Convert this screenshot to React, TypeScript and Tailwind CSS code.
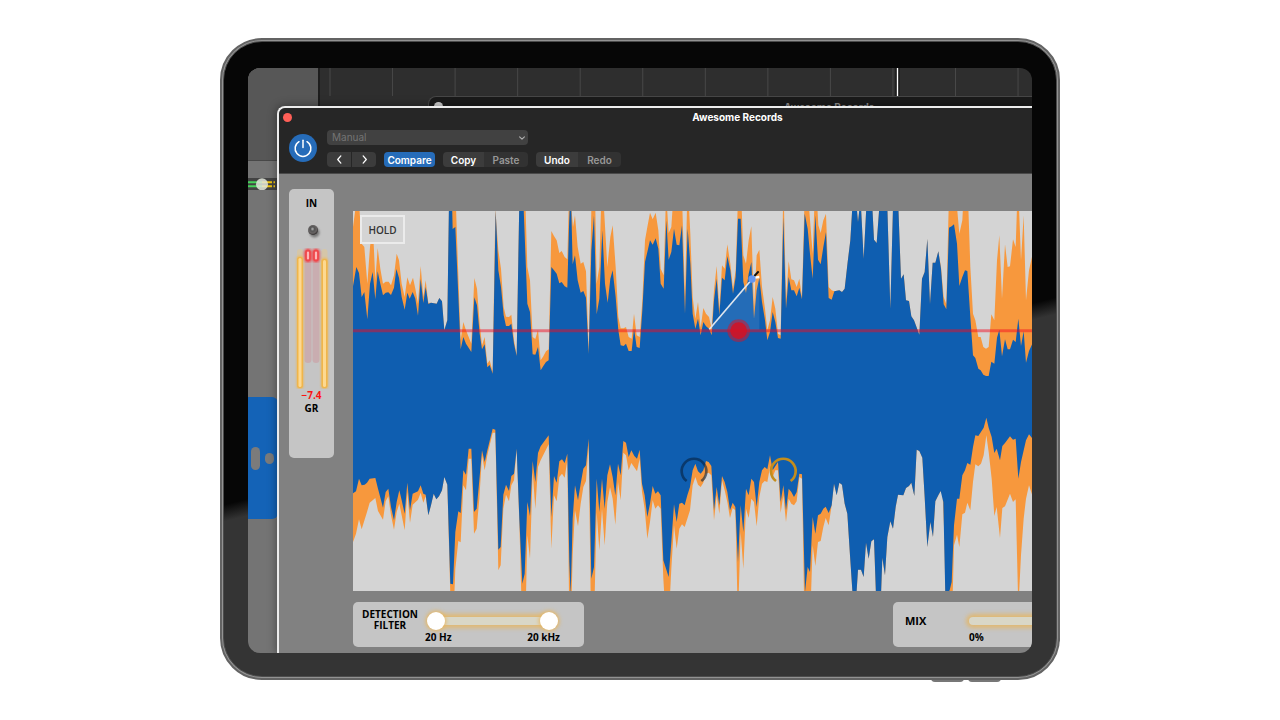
import type { ReactNode } from 'react';

type Segment = [offset: number, points: string];

const LOWER_OFFSET = 585;

const upperPeaks: Segment[] = [
  [0, '24,80 32,20 43,20 50,130 58,140 67,250 75,140 80,100 86,130 91,240 98,143 106,205 114,250 122,244 131,244 138,255 147,225 155,160 162,180 170,250 179,290 187,231 195,255 204,232 211,265 219,310 227,197 235,290 242,240 250,308 258,307 275,310 283,293 291,303 298,390 307,358 312,20 333,20 338,170 347,420 355,365 363,390 379,430 388,233 396,265 404,370 411,435 419,410 427,490 434,480 443,515 451,25 460,150 468,205 476,320 483,349 492,350 499,343 507,420 515,465 523,0 541,0 547,200 555,240 563,410 571,416 579,388 587,480 595,468 603,453 611,447 619,92 627,107 635,120 643,158 650,152 659,170 667,177 671,20 679,20 684,80'],
  [690, '0,45 8,140 17,190 25,185 33,213 41,450 49,25 61,25 65,250 73,200 78,25 87,25 97,200 106,110 113,75 122,200 130,350 137,384 146,384 153,380 161,410 170,415 177,340 185,405 194,410 202,300 210,120 217,80 225,37 233,57 242,37 250,90 257,205 266,225 272,20 276,20 281,98 289,80 293,20 322,20 330,290 336,20 342,20 346,100 353,290 361,355 369,305 377,382 385,323 393,340 402,350 410,385 417,270 425,197 433,325 441,195 449,205 457,132 466,190 474,265 482,210 488,20 500,20 505,165 513,190 521,120 529,78 537,320 545,165 553,148 561,260 570,325 577,390 585,360 593,290 601,325 609,400 617,405 624,20 627,20 633,300 641,183 649,237 657,240 665,260 673,235 681,290 688,20'],
  [1380, '12,20 23,160 28,20 37,20 40,75 47,98 55,60 63,40 71,260 80,270 88,273 103,270 111,275 119,265 128,185 136,120 142,20 155,20 159,65 164,20 168,20 176,175 184,20 202,20 207,118 215,128 223,20 247,20 256,325 264,20 280,20 288,235 296,222 303,300 312,302 319,348 327,360 343,403 351,235 359,215 367,115 375,312 383,187 391,187 400,153 408,200 416,290 424,312 431,20 456,20 463,100 472,60 474,20 490,20 496,200 504,340 511,360 520,410 527,410 535,440 543,445 551,440 559,342 568,360 576,180 583,105 591,295 600,132 608,200 615,198 624,117 632,140 636,20 642,20 648,180 656,45 663,300 672,210 683,160'],
];

const lowerPeaks: Segment[] = [
  [0, '24,440 33,415 42,372 50,402 66,350 74,322 83,315 91,308 99,347 114,373 122,318 130,303 138,360 147,403 155,350 163,325 170,360 179,405 187,290 195,383 203,328 219,313 227,292 235,322 242,303 250,360 258,330 266,295 274,312 282,303 291,285 298,245 307,268 316,600 328,600 331,520 340,437 347,441 355,270 363,285 371,190 379,190 387,415 395,400 403,310 411,180 419,225 427,180 443,112 451,112 460,525 467,510 475,340 483,298 492,318 499,270 507,255 515,162 523,380 529,600 543,600 547,420 555,490 563,230 571,340 579,215 587,195 611,147 619,460 627,300 635,318 643,245 651,235 659,247 667,195 672,600 680,600 683,480'],
  [690, '0,345 9,393 17,325 25,275 33,257 41,150 47,600 59,600 65,350 73,465 81,340 89,450 97,320 105,275 113,310 121,388 129,260 137,315 145,172 153,180 161,225 169,203 186,228 194,190 201,290 209,340 217,430 225,380 233,315 241,340 249,330 257,340 265,550 268,600 285,600 289,520 297,390 305,460 313,400 321,387 329,395 337,370 345,345 353,270 361,245 369,268 377,275 385,262 393,235 401,232 409,240 417,375 425,300 433,355 441,255 449,285 457,320 465,368 473,338 481,345 487,600 491,600 497,410 505,520 513,340 521,368 529,310 537,320 545,393 553,305 561,265 569,257 577,260 585,215 593,245 601,225 609,225 617,352 625,300 633,380 641,310 649,325 657,330 665,318 673,245 681,250 687,600'],
  [1380, '0,600 18,600 23,450 31,512 39,440 47,437 55,395 62,368 71,390 80,330 87,265 95,300 103,262 111,268 119,325 127,355 135,480 143,600 154,600 159,523 168,523 176,545 183,442 191,490 199,438 207,432 213,600 228,600 232,487 240,540 247,425 256,378 264,400 272,335 279,298 295,300 303,278 312,272 319,262 328,302 335,163 343,167 352,187 359,305 367,455 376,380 384,425 391,318 400,300 407,287 413,300 418,420 421,600 443,600 447,450 456,418 463,455 472,357 480,352 487,322 496,345 504,260 511,207 520,213 528,205 536,180 544,120 551,170 560,250 568,362 575,335 585,428 592,338 600,333 615,295 624,320 632,312 639,600 642,600 648,480 656,370 663,310 672,270 683,304'],
];

const upperLevel: Segment[] = [
  [0, '24,258 34,200 42,218 50,290 58,275 67,357 75,250 83,215 91,297 98,213 106,250 114,285 122,277 130,276 138,284 147,262 154,206 162,232 170,290 179,328 187,277 194,295 203,275 211,295 219,346 227,236 235,308 242,260 250,311 258,307 275,310 283,293 291,303 298,390 307,360 312,0 321,0 323,86 331,80 347,447 355,410 363,430 379,455 388,291 396,315 404,400 411,447 419,432 427,501 434,494 443,520 452,30 460,210 468,260 476,345 483,377 492,377 499,370 507,430 515,467 523,0 535,0 547,310 555,335 563,462 571,463 579,440 587,510 595,497 603,485 611,480 619,200 627,210 635,220 643,249 650,245 659,258 667,262 672,80 675,0 679,32 683,192'],
  [690, '0,165 8,240 17,277 25,272 33,292 41,460 49,150 57,45 65,342 73,295 82,90 90,250 98,307 106,235 113,210 122,290 130,390 137,435 146,437 153,430 161,452 170,452 177,385 185,440 194,443 202,330 210,185 217,155 225,120 233,133 242,114 250,145 257,250 266,265 274,60 281,178 289,155 297,85 305,133 313,135 321,75 330,340 338,85 346,190 353,340 361,385 369,355 377,405 385,365 393,378 402,385 410,405 417,300 425,235 433,345 441,232 449,240 457,168 466,210 474,280 482,230 489,55 497,55 505,245 513,278 521,220 529,185 537,355 545,270 553,232 561,305 570,360 577,420 585,395 593,335 601,365 609,413 617,415 625,50 633,325 641,230 649,270 657,270 665,288 673,262 681,297 689,40'],
  [1380, '0,45 8,85 15,160 23,235 31,45 39,178 47,192 55,140 63,95 71,293 80,298 88,273 103,270 111,275 119,265 128,185 136,120 142,20 155,20 159,65 164,20 168,20 176,175 184,20 202,20 207,118 215,128 223,20 247,20 256,325 264,20 280,20 288,235 296,222 303,300 312,302 319,348 327,360 343,403 351,235 359,215 367,115 375,312 383,187 391,187 400,153 408,205 416,312 424,327 432,82 440,78 447,72 456,130 463,257 472,230 480,210 487,212 496,350 504,465 511,473 520,505 527,510 535,523 543,527 551,527 559,484 568,490 576,412 583,388 591,468 600,417 608,447 615,447 624,418 632,425 640,355 648,437 656,393 663,487 672,452 683,428'],
];

const lowerLevel: Segment[] = [
  [0, '24,294 33,288 42,250 50,270 59,268 66,262 74,250 91,248 99,280 114,337 122,290 130,280 138,335 147,375 155,320 163,285 170,315 179,355 187,262 195,345 203,295 219,288 227,270 235,295 242,298 250,360 258,330 266,295 274,312 282,303 291,285 298,245 307,268 316,565 324,567 331,410 340,348 347,353 355,225 363,238 371,160 379,160 387,350 395,340 403,255 411,165 419,200 427,165 443,100 451,103 460,463 467,455 475,298 483,268 492,287 499,242 507,235 515,160 523,370 532,565 539,535 547,320 555,362 563,197 571,260 579,173 587,153 611,120 619,365 627,242 635,262 643,198 651,192 659,203 667,175 673,500 677,600 683,370'],
  [690, '0,270 9,315 17,265 25,220 33,210 41,130 49,550 57,515 65,250 73,350 81,250 89,340 97,240 105,207 113,245 121,300 129,205 137,240 145,137 153,142 161,185 169,165 178,182 186,190 194,163 201,265 209,300 217,365 225,325 233,272 241,295 249,288 257,300 265,495 281,545 289,440 297,327 305,380 313,325 321,322 329,330 337,300 345,275 353,225 361,205 369,228 377,235 385,225 393,197 401,200 409,212 417,345 425,275 433,330 441,242 449,260 457,290 465,345 473,322 481,335 489,500 497,330 505,410 513,280 521,300 529,250 537,260 545,335 553,260 561,225 569,215 577,222 585,180 593,225 609,200 617,320 625,270 633,345 641,280 649,290 657,305 665,290 673,235 681,237'],
  [1380, '0,590 8,515 15,530 23,365 31,415 39,360 47,355 55,340 62,334 71,353 80,330 87,265 95,300 103,262 111,268 119,325 127,355 135,480 143,600 154,600 159,523 168,523 176,545 183,442 191,490 199,438 207,432 213,600 228,600 232,487 240,540 247,425 256,378 264,400 272,335 279,298 295,300 303,278 312,272 319,262 328,302 335,163 343,167 352,187 359,305 367,455 376,380 384,425 391,318 400,300 407,287 415,320 421,600 434,585 440,560 447,390 456,310 463,310 472,240 480,225 487,203 496,208 504,155 511,120 520,122 536,97 544,67 551,97 560,125 568,173 575,160 585,195 592,152 600,143 615,123 624,133 632,130 640,250 648,200 663,135 672,117 683,130'],
];

function expand(segments: Segment[], dy: number): string[] {
  return segments.flatMap(([dx, points]) =>
    points.split(' ').map((pair) => {
      const [x, y] = pair.split(',').map(Number);
      return `${x + dx},${y + dy}`;
    }),
  );
}

function band(upper: Segment[], lower: Segment[]): string {
  return [...expand(upper, 0), ...expand(lower, LOWER_OFFSET).reverse()].join(' ');
}

function Waveform() {
  return (
    <svg
      className="block h-[380px] w-full bg-[#d4d4d4]"
      viewBox="24 32 2037 1140"
      preserveAspectRatio="none"
      role="img"
      aria-label="Waveform"
    >
      <polygon points={band(upperPeaks, lowerPeaks)} fill="#f7983d" />
      <polygon points={band(upperLevel, lowerLevel)} fill="#0f5eb0" />
      <polygon points="1093,388 1225,233 1243,233 1243,388" fill="#fff" opacity="0.09" />
      <path d="M24 391H2061" stroke="#f50a1e" strokeWidth="9" opacity="0.48" />
      <path d="M1093 387L1217 241" stroke="#dfe6ee" strokeWidth="5" />
      <path d="M1228 232L1243 230" stroke="#fff" strokeWidth="7" />
      <path d="M1228 227L1241 213" stroke="#111" strokeWidth="6" />
      <circle cx="1221" cy="236" r="11" fill="#6596f0" />
      <circle cx="1181" cy="391" r="34" fill="#e1101f" opacity="0.5" />
      <circle cx="1181" cy="391" r="25" fill="#d41224" opacity="0.85" />
      <path d="M1025 842A37 37 0 1 1 1069 842" fill="none" stroke="#06213f" strokeWidth="8" opacity="0.6" />
      <path d="M1293 842A37 37 0 1 1 1337 842" fill="none" stroke="#c48d1c" strokeWidth="8" />
    </svg>
  );
}

function Desktop() {
  return (
    <div className="absolute inset-0 flex bg-[#2e2e2e]" aria-hidden="true">
      <div className="flex w-[70px] shrink-0 flex-col bg-[#747474]">
        <div className="h-[93px] border-b border-[#484848] bg-[#575757]" />
        <div className="mt-[17px] h-3 bg-[#434343]">
          <svg className="block h-3 w-[30px]" viewBox="0 0 30 12">
            <path d="M0 4.3H14M0 8.3H14" stroke="#45d35a" strokeWidth="2" />
            <path d="M14 4.3H24M14 8.3H24M25.5 4.3H27M25.5 8.3H27" stroke="#f3c80c" strokeWidth="2" />
            <circle cx="14" cy="6.3" r="6" fill="#e2e6da" opacity="0.85" />
          </svg>
        </div>
        <div className="mt-[207px] flex h-[122px] w-[30px] items-center gap-[5px] rounded-r-md bg-[#1463b7] pl-[3px]">
          <span className="h-[23px] w-[9px] rounded-full bg-[#7b7b7b]" />
          <span className="h-[11px] w-[9px] rounded-full bg-[#7b7b7b]" />
        </div>
      </div>
      <div className="relative h-10 flex-1 overflow-hidden border-l-2 border-[#1d1d1d]">
        <svg className="block h-7 w-[720px]" viewBox="0 0 720 28">
          {Array.from({ length: 12 }, (_, i) => (
            <path key={i} d={`M${10 + i * 62.55} 0V28`} stroke="#484848" strokeWidth="1" />
          ))}
          <path d="M577.5 0V28" stroke="#111" strokeWidth="4" />
          <path d="M577.5 0V28" stroke="#fff" strokeWidth="1.4" />
        </svg>
        <div className="ml-[108px] h-5 rounded-tl-lg border-t border-l border-[#474747] bg-[#1a1a1a] pt-[5px]">
          <div className="flex items-start pl-[5px]">
            <span className="size-[9px] rounded-full bg-[#d0d0d0]" />
            <span className="ml-[341px] text-[10px] leading-[10px] font-bold text-[#8b8b8b]">Awesome Records</span>
          </div>
        </div>
      </div>
    </div>
  );
}

function ToolButton({ children, className = '', label }: { children: ReactNode; className?: string; label?: string }) {
  return (
    <button
      type="button"
      aria-label={label}
      className={`flex h-[15px] items-center justify-center text-[10px] leading-none font-semibold ${className}`}
    >
      {children}
    </button>
  );
}

function Chevron({ d, className }: { d: string; className?: string }) {
  return (
    <svg className={className} viewBox="0 0 10 10" fill="none" stroke="currentColor" strokeWidth="1.4" strokeLinecap="round" strokeLinejoin="round">
      <path d={d} />
    </svg>
  );
}

function Header() {
  return (
    <header className="h-[66px] border-b border-[#4a4a4a] bg-[#262626] text-white">
      <div className="flex h-[18px] items-center pl-1">
        <button type="button" aria-label="Close" className="size-[9px] rounded-full bg-[#ff5f57]" />
        <h1 className="flex-1 pl-[151px] text-center text-[10px] leading-3 font-bold">Awesome Records</h1>
      </div>
      <div className="flex items-start pl-[10px]">
        <button type="button" aria-label="Power" className="mt-2 flex size-7 items-center justify-center rounded-full bg-[#266cb9]">
          <svg className="size-5" viewBox="0 0 20 20" fill="none" stroke="#fff" strokeWidth="1.5" strokeLinecap="round">
            <path d="M10 2.2V9.6" />
            <path d="M6 3.7A7.9 7.900 0 1 0 14 3.7" />
          </svg>
        </button>
        <div className="ml-[10px] flex flex-col gap-[7px] pt-1">
          <div className="relative w-[201px] text-[#747474]">
            <select
              aria-label="Preset"
              className="block h-[15px] w-full appearance-none rounded bg-[#414141] pl-[5px] text-[10px] leading-[15px]"
            >
              <option>Manual</option>
            </select>
            <Chevron d="M2 3.5L5 6.5L8 3.5" className="pointer-events-none absolute top-1 right-[2px] size-2 text-[#b0b0b0]" />
          </div>
          <div className="flex gap-2">
            <div className="flex gap-px">
              <ToolButton label="Previous preset" className="w-[24px] rounded-l bg-[#3c3c3c]">
                <Chevron d="M6.5 1L3 5L6.5 9" className="size-[9px]" />
              </ToolButton>
              <ToolButton label="Next preset" className="w-[24px] rounded-r bg-[#3c3c3c]">
                <Chevron d="M3.5 1L7 5L3.5 9" className="size-[9px]" />
              </ToolButton>
            </div>
            <ToolButton className="w-[51px] rounded bg-[#266cb9]">Compare</ToolButton>
            <div className="flex">
              <ToolButton className="w-[41px] rounded-l bg-[#3c3c3c]">Copy</ToolButton>
              <ToolButton className="w-[44px] rounded-r bg-[#323232] text-[#979797]">Paste</ToolButton>
            </div>
            <div className="flex">
              <ToolButton className="w-[42px] rounded-l bg-[#3c3c3c]">Undo</ToolButton>
              <ToolButton className="w-[43px] rounded-r bg-[#323232] text-[#979797]">Redo</ToolButton>
            </div>
          </div>
        </div>
      </div>
    </header>
  );
}

function InputMeter() {
  return (
    <section
      aria-label="Input meter"
      className="flex h-[269px] w-[45px] shrink-0 flex-col items-center rounded-[5px] bg-[#c5c5c5] pt-2 text-[10px] leading-3 font-bold text-black"
    >
      <h2>IN</h2>
      <svg className="block h-[180px] w-[45px]" viewBox="0 0 45 180" aria-hidden="true">
        <defs>
          <radialGradient id="knob" cx="0.45" cy="0.4" r="0.6">
            <stop offset="0" stopColor="#b5b5b5" />
            <stop offset="0.35" stopColor="#555" />
            <stop offset="0.7" stopColor="#686464" />
            <stop offset="1" stopColor="#2d2929" />
          </radialGradient>
          <filter id="soft" x="-50%" y="-50%" width="200%" height="200%">
            <feGaussianBlur stdDeviation="1" />
          </filter>
          <filter id="glow" x="-100%" y="-10%" width="300%" height="120%">
            <feGaussianBlur stdDeviation="0.8" />
          </filter>
        </defs>
        <circle cx="25.5" cy="23.5" r="5" fill="#777" filter="url(#soft)" />
        <circle cx="24" cy="21" r="5" fill="url(#knob)" />
        <rect x="15.5" y="41" width="7" height="113" rx="3.5" fill="#c9adb0" />
        <rect x="23.5" y="41" width="7" height="113" rx="3.5" fill="#c9adb0" />
        <rect x="8" y="40" width="6" height="20" rx="3" fill="#d5c6a8" />
        <rect x="32.5" y="40" width="6" height="20" rx="3" fill="#d5c6a8" />
        <g fill="none" stroke="#f0474b">
          <rect x="16.5" y="41" width="5" height="11" rx="2.5" strokeWidth="3.5" opacity="0.75" filter="url(#glow)" />
          <rect x="24.5" y="41" width="5" height="11" rx="2.5" strokeWidth="3.5" opacity="0.75" filter="url(#glow)" />
          <rect x="17" y="41.5" width="4" height="10" rx="2" strokeWidth="1.8" fill="#ffb5b5" />
          <rect x="25" y="41.5" width="4" height="10" rx="2" strokeWidth="1.8" fill="#ffb5b5" />
        </g>
        <g fill="#f0b54a">
          <rect x="7.5" y="47" width="7" height="133" rx="3" opacity="0.8" filter="url(#glow)" />
          <rect x="32" y="49" width="7" height="131" rx="3" opacity="0.8" filter="url(#glow)" />
          <rect x="8" y="48" width="6" height="131" rx="2.5" />
          <rect x="32.5" y="50" width="6" height="129" rx="2.5" />
        </g>
        <g fill="#fdd991">
          <rect x="9.5" y="49" width="3" height="129" rx="1.5" />
          <rect x="34" y="51" width="3" height="127" rx="1.5" />
        </g>
      </svg>
      <output className="leading-[13px] text-[#fb1414]">−7.4</output>
      <h2>GR</h2>
    </section>
  );
}

const rangeClass =
  'col-start-1 row-start-1 m-0 h-[18px] w-full cursor-pointer appearance-none bg-transparent pointer-events-none [&::-webkit-slider-thumb]:pointer-events-auto [&::-webkit-slider-thumb]:size-[18px] [&::-webkit-slider-thumb]:appearance-none [&::-webkit-slider-thumb]:rounded-full [&::-webkit-slider-thumb]:bg-white [&::-webkit-slider-thumb]:shadow-[0_0_4px_1px_#e9b75f]';

const trackClass =
  'col-start-1 row-start-1 h-2 self-center rounded-full bg-[#d9d7c7] shadow-[0_0_4px_3px_#e0b872]';

function DetectionFilter() {
  return (
    <section
      aria-label="Detection filter"
      className="flex h-[45px] w-[231px] items-start rounded-[5px] bg-[#c5c5c5] text-[10px] font-bold text-black"
    >
      <h2 className="flex w-[74px] flex-col items-center pt-[7px] leading-[11px]">
        <span>DETECTION</span>
        <span>FILTER</span>
      </h2>
      <div className="w-[139px] pt-[10px]">
        <div className="mr-2 grid">
          <div className={`${trackClass} mx-1`} />
          <input id="low-cut" type="range" min="0" max="100" defaultValue="0" className={rangeClass} />
          <input id="high-cut" type="range" min="0" max="100" defaultValue="100" className={rangeClass} />
        </div>
        <div className="flex justify-between pr-[6px] leading-3">
          <label htmlFor="low-cut" className="-ml-0.5 pt-px">20 Hz</label>
          <label htmlFor="high-cut" className="pt-px">20 kHz</label>
        </div>
      </div>
    </section>
  );
}

function Mix() {
  return (
    <section
      aria-label="Mix"
      className="flex h-[45px] w-[139px] items-start overflow-hidden rounded-l-[5px] bg-[#c5c5c5] pl-3 font-bold text-black"
    >
      <label htmlFor="mix" className="w-[64px] shrink-0 pt-[11px] text-[11px] leading-4">MIX</label>
      <div className="w-[170px] shrink-0 pt-[10px]">
        <div className="grid">
          <div className={trackClass} />
          <input id="mix" type="range" min="0" max="100" defaultValue="100" className={rangeClass} />
        </div>
        <div className="pt-px text-[10px] leading-3">0%</div>
      </div>
    </section>
  );
}

function PluginWindow() {
  return (
    <div className="relative mt-[38px] ml-[29px] overflow-hidden rounded-tl-[8px] border-t-2 border-l-2 border-[#ececec] bg-[#818181] shadow-[0_0_8px_1px_rgba(0,0,0,0.35)]">
      <Header />
      <main className="flex gap-[19px] pt-[15px] pb-[6px] pl-[10px] font-['Open_Sans','Noto_Sans',sans-serif]">
        <InputMeter />
        <div className="flex min-w-0 flex-1 flex-col gap-[11px] pt-[22px]">
          <div className="relative">
            <Waveform />
            <button
              type="button"
              className="absolute top-1 left-[7px] h-[29px] w-[45px] border-2 border-[#ebebeb] bg-[#d4d4d4] text-[10px] leading-none font-semibold text-[#333]"
            >
              HOLD
            </button>
          </div>
          <div className="flex justify-between">
            <DetectionFilter />
            <Mix />
          </div>
        </div>
      </main>
    </div>
  );
}

export default function App() {
  return (
    <div className="min-h-screen bg-white pt-[38px] pb-10 font-['Inter',sans-serif]">
      <div className="relative mx-auto w-full max-w-[840px]">
        <div className="absolute top-[562px] right-0 h-[43px] w-1 rounded-r-sm bg-[#555]" />
        <div className="absolute right-[59px] -bottom-[2px] flex gap-1">
          <span className="h-1 w-[33px] rounded-b-sm bg-[#777]" />
          <span className="h-1 w-[33px] rounded-b-sm bg-[#777]" />
        </div>
        <div className="relative rounded-[42px] border-2 border-[#636363] bg-[#929292] p-px">
          <div className="rounded-[39px] border border-[#4c4c4c] bg-[linear-gradient(166deg,#060606_55%,#343434_57%)] px-6 pt-[26px] pb-[23px]">
            <div className="relative overflow-hidden rounded-[12px]">
              <Desktop />
              <PluginWindow />
            </div>
          </div>
        </div>
      </div>
    </div>
  );
}
